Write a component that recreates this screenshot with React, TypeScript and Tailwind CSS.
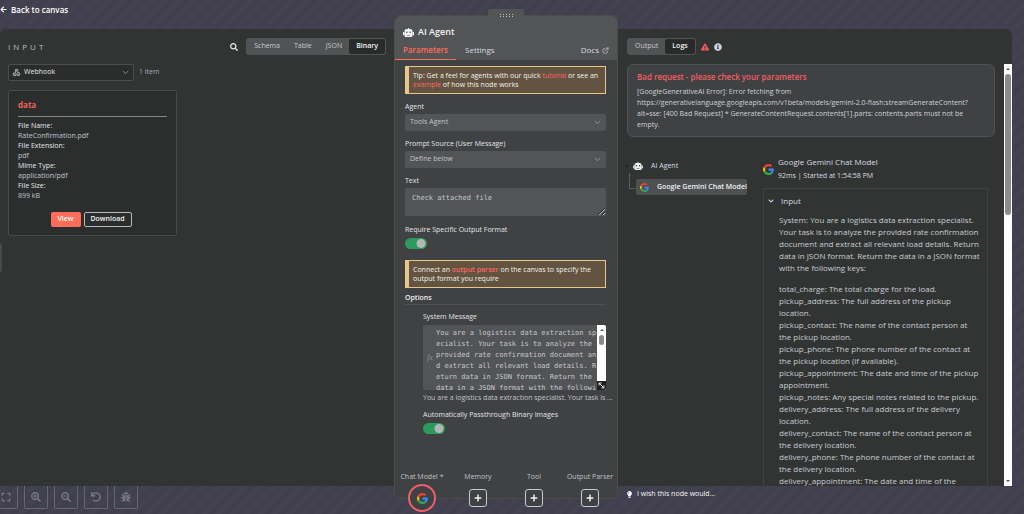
import React from 'react';
import {
  FaArrowLeft,
  FaBug,
  FaChevronDown,
  FaExclamationTriangle,
  FaExpand,
  FaInfoCircle,
  FaLightbulb,
  FaPlus,
  FaSearch,
  FaSearchMinus,
  FaSearchPlus,
  FaUndo,
} from 'react-icons/fa';
import { FiChevronDown, FiExternalLink } from 'react-icons/fi';
import { MdWebhook } from 'react-icons/md';

const SYSTEM_MESSAGE = `You are a logistics data extraction sp
ecialist. Your task is to analyze the
provided rate confirmation document an
d extract all relevant load details. R
eturn data in JSON format. Return the
data in a JSON format with the followi`;

const FILE_FIELDS = [
  { label: 'File Name:', value: 'RateConfirmation.pdf' },
  { label: 'File Extension:', value: 'pdf' },
  { label: 'Mime Type:', value: 'application/pdf' },
  { label: 'File Size:', value: '899 kB' },
];

const PROMPT_KEYS = [
  'total_charge: The total charge for the load.',
  'pickup_address: The full address of the pickup location.',
  'pickup_contact: The name of the contact person at the pickup location.',
  'pickup_phone: The phone number of the contact at the pickup location (if available).',
  'pickup_appointment: The date and time of the pickup appointment.',
  'pickup_notes: Any special notes related to the pickup.',
  'delivery_address: The full address of the delivery location.',
  'delivery_contact: The name of the contact person at the delivery location.',
  'delivery_phone: The phone number of the contact at the delivery location.',
  'delivery_appointment: The date and time of the',
];

const CANVAS_TOOLS = [
  { name: 'Fit view', icon: FaExpand },
  { name: 'Zoom in', icon: FaSearchPlus },
  { name: 'Zoom out', icon: FaSearchMinus },
  { name: 'Reset zoom', icon: FaUndo },
  { name: 'Debug', icon: FaBug },
];

const GoogleIcon: React.FC<{ className?: string }> = ({ className }) => (
  <svg viewBox="0 0 48 48" className={className} aria-hidden="true">
    <path fill="#EA4335" d="M24 9.5c3.54 0 6.71 1.22 9.21 3.6l6.85-6.85C35.9 2.38 30.47 0 24 0 14.62 0 6.51 5.38 2.56 13.22l7.98 6.19C12.43 13.72 17.74 9.5 24 9.5z" />
    <path fill="#4285F4" d="M46.98 24.55c0-1.57-.15-3.09-.38-4.55H24v9.02h12.94c-.58 2.96-2.26 5.48-4.78 7.18l7.73 6c4.51-4.18 7.09-10.36 7.09-17.65z" />
    <path fill="#FBBC05" d="M10.53 28.59c-.48-1.45-.76-2.99-.76-4.59s.27-3.14.76-4.59l-7.98-6.19C.92 16.46 0 20.12 0 24c0 3.88.92 7.54 2.56 10.78l7.97-6.19z" />
    <path fill="#34A853" d="M24 48c6.48 0 11.93-2.13 15.89-5.81l-7.73-6c-2.15 1.45-4.92 2.3-8.16 2.3-6.26 0-11.57-4.22-13.47-9.91l-7.98 6.19C6.51 42.62 14.62 48 24 48z" />
  </svg>
);

const RobotIcon: React.FC<{ className?: string }> = ({ className }) => (
  <svg viewBox="0 0 22 18" className={className} fill="currentColor" aria-hidden="true">
    <path
      fillRule="evenodd"
      d="M10 0h2v2h2.500A4.500 4.500 0 0 1 19 6.500V15a3 3 0 0 1-3 3H6a3 3 0 0 1-3-3V6.500A4.500 4.500 0 0 1 7.500 2H10V0zM7.500 7a1.600 1.600 0 1 0 0 3.200 1.600 1.600 0 0 0 0-3.200zm7 0a1.600 1.600 0 1 0 0 3.200 1.600 1.600 0 0 0 0-3.200zM7.500 14v1h7v-1h-7z"
    />
    <path d="M3 8v6.500H1a1 1 0 0 1-1-1V9a1 1 0 0 1 1-1h2zM19 8v6.500h2a1 1 0 0 0 1-1V9a1 1 0 0 0-1-1h-2z" />
  </svg>
);

interface SegmentedProps {
  items: string[];
  active: string;
}

const Segmented: React.FC<SegmentedProps> = ({ items, active }) => (
  <div className="flex h-[17px] rounded-[3px] bg-[#525355] p-px">
    {items.map((item) => (
      <button
        key={item}
        type="button"
        className={
          item === active
            ? 'rounded-[2px] bg-[#292b2b] px-[7px] text-[7px] font-semibold text-[#f0f1f4]'
            : 'px-[7px] text-[7px] font-medium text-[#c6c9d1]'
        }
      >
        {item}
      </button>
    ))}
  </div>
);

interface SelectFieldProps {
  id: string;
  label: string;
  value: string;
}

const SelectField: React.FC<SelectFieldProps> = ({ id, label, value }) => (
  <div className="mt-[7px] flex flex-col gap-px">
    <label htmlFor={id} className="text-[7px] leading-3 font-medium text-[#e2e4e8]">
      {label}
    </label>
    <div className="relative">
      <select
        id={id}
        className="block h-[17px] w-full appearance-none rounded-[2px] bg-[#535456] px-[5px] text-[7px] text-[#c1c3c9]"
      >
        <option>{value}</option>
      </select>
      <FiChevronDown className="pointer-events-none absolute top-1 right-1 size-[9px] text-[#a5a8ae]" />
    </div>
  </div>
);

const Toggle: React.FC<{ id: string }> = ({ id }) => (
  <input
    id={id}
    type="checkbox"
    role="switch"
    defaultChecked
    className="mt-0.5 block h-[11px] w-[22px] appearance-none rounded-full bg-[#2b9a5c] bg-[radial-gradient(circle_at_16px_50%,#b4b5b7_4px,transparent_5px)]"
  />
);

const Notice: React.FC<{ children: React.ReactNode }> = ({ children }) => (
  <p className="border border-l-4 border-[#e6c68c] bg-[#625440] py-1 pr-1 pl-1 text-[7px] leading-[9px] text-[#f4f2ee]">
    {children}
  </p>
);

const InputPanel: React.FC = () => (
  <section className="relative flex min-h-0 flex-1 flex-col overflow-hidden rounded-tl-md bg-[#323433] px-2 pt-[9px]">
    <div className="flex h-[17px] items-center justify-between">
      <h2 className="text-[8px] font-medium tracking-[3px] text-[#b9bcc4]">INPUT</h2>
      <div className="flex items-center gap-1">
        <button type="button" aria-label="Search" className="p-1">
          <FaSearch className="size-2 text-[#e6e7ea]" />
        </button>
        <Segmented items={['Schema', 'Table', 'JSON', 'Binary']} active="Binary" />
      </div>
    </div>

    <div className="mt-[9px] flex items-center gap-[5px]">
      <div className="relative w-[126px]">
        <MdWebhook className="absolute top-1 left-1 size-[9px] text-[#c9cbd0]" />
        <select
          aria-label="Input node"
          className="block h-[17px] w-full appearance-none rounded-[2px] border border-[#4c4e4e] bg-[#2b2d2d] pl-[15px] text-[7px] font-medium text-[#e6e7ea]"
        >
          <option>Webhook</option>
        </select>
        <FiChevronDown className="pointer-events-none absolute top-1 right-1 size-[9px] text-[#a5a8ae]" />
      </div>
      <span className="text-[7px] text-[#a3a9b8]">1 item</span>
    </div>

    <article className="mt-[9px] w-[169px] rounded-[2px] border border-[#484a4a] bg-[#2c2e2e] px-[9px] pt-1.5 pb-2">
      <h3 className="border-b border-[#84868a] pb-[3px] text-[8px] leading-4 font-bold text-[#f0605a]">data</h3>
      <dl className="mt-1 text-[7px] leading-[10px] text-[#c0c4cd]">
        {FILE_FIELDS.map((field) => (
          <React.Fragment key={field.label}>
            <dt className="font-medium text-[#e4e6ea]">{field.label}</dt>
            <dd>{field.value}</dd>
          </React.Fragment>
        ))}
      </dl>
      <div className="mt-[11px] flex justify-center gap-[3px] pr-[3px]">
        <button type="button" className="h-[15px] w-[30px] rounded-[2px] bg-[#ff6d5a] text-[7px] font-semibold text-white">
          View
        </button>
        <button type="button" className="h-[15px] w-12 rounded-[2px] border border-[#b4b8c0] text-[7px] font-semibold text-[#f0f1f3]">
          Download
        </button>
      </div>
    </article>

    <span className="absolute top-[214px] left-0 h-[29px] w-0.5 rounded-r-sm bg-[#47494a]" />
  </section>
);

const ParametersPanel: React.FC = () => (
  <section className="flex min-h-0 flex-1 flex-col rounded-md border border-[#4b4c4e] bg-[#404143]">
    <header className="rounded-t-md bg-[#535456] px-2 pt-2">
      <h1 className="flex items-center gap-1 text-[9px] leading-4 font-semibold text-[#f3f3f5]">
        <RobotIcon className="h-[9px] w-[11px]" />
        AI Agent
      </h1>
      <nav className="flex h-5 items-stretch text-[8px] font-medium text-[#d9dde4]">
        <button type="button" className="-ml-2 border-b border-[#ff6f5c] px-2 font-semibold text-[#ff6a5a]">
          Parameters
        </button>
        <button type="button" className="px-[9px]">
          Settings
        </button>
        <a href="#docs" className="ml-auto flex items-center gap-[3px]">
          Docs
          <FiExternalLink className="size-[7px]" />
        </a>
      </nav>
    </header>

    <div className="flex min-h-0 flex-1 flex-col pt-1.5 pr-[11px] pl-[10px]">
      <Notice>
        Tip: Get a feel for agents with our quick{' '}
        <a href="#tutorial" className="font-medium text-[#ff6464]">tutorial</a> or see an{' '}
        <a href="#example" className="font-medium text-[#ff6464]">example</a> of how this node works
      </Notice>

      <SelectField id="agent" label="Agent" value="Tools Agent" />
      <SelectField id="prompt-source" label="Prompt Source (User Message)" value="Define below" />

      <div className="mt-[7px] flex flex-col gap-px">
        <label htmlFor="text" className="text-[7px] leading-3 font-medium text-[#e2e4e8]">Text</label>
        <textarea
          id="text"
          defaultValue="Check attached file"
          className="block h-7 resize-y rounded-[2px] bg-[#535456] px-[7px] py-1 font-['DejaVu_Sans_Mono',monospace] text-[7px] leading-3 text-[#c6c8cc]"
        />
      </div>

      <div className="mt-2 mb-[11px]">
        <label htmlFor="output-format" className="block text-[7px] leading-3 font-medium text-[#e2e4e8]">
          Require Specific Output Format
        </label>
        <Toggle id="output-format" />
      </div>

      <Notice>
        Connect an <a href="#parser" className="font-semibold text-[#ff6464]">output parser</a> on the canvas to specify the output format you require
      </Notice>

      <h2 className="mt-1 border-b border-[#4e4f51] text-[7px] leading-3 font-semibold text-[#ececef]">Options</h2>

      <div className="mt-1.5 pl-[18px]">
        <label htmlFor="system-message" className="block text-[7px] leading-3 font-medium text-[#e2e4e8]">
          System Message
        </label>
        <div className="mt-0.5 flex h-[65px] overflow-hidden rounded-[2px] bg-[#535456]">
          <span className="flex w-[13px] items-center pl-1 font-['Liberation_Serif',serif] text-[8px] text-[#8e9094] italic">fx</span>
          <textarea
            id="system-message"
            defaultValue={SYSTEM_MESSAGE}
            className="min-w-0 flex-1 resize-none overflow-hidden pt-[3px] font-['DejaVu_Sans_Mono',monospace] text-[7px] leading-[11px] whitespace-pre text-[#c6c8cc]"
          />
          <div className="flex w-[9px] flex-col items-center bg-white pt-1">
            <span className="size-0 border-x-2 border-b-2 border-x-transparent border-b-[#555]" />
            <span className="mt-1 h-[10px] w-[5px] rounded-full bg-[#8a8a8a]" />
            <button type="button" aria-label="Expand editor" className="mt-auto flex size-[9px] items-center justify-center bg-[#1f2020]">
              <svg viewBox="0 0 10 10" className="size-[7px]" fill="none" stroke="#f0f0f0" strokeWidth="1.4">
                <path d="M2 2l6 6M1.500 5V1.500H5M8.500 5v3.500H5" />
              </svg>
            </button>
          </div>
        </div>
        <p className="-mr-1.5 mt-0.5 text-[7px] leading-3 whitespace-nowrap text-[#c0c3ca]">
          You are a logistics data extraction specialist. Your task is ...
        </p>
        <label htmlFor="passthrough" className="mt-[5px] block text-[7px] leading-3 font-medium text-[#e2e4e8]">
          Automatically Passthrough Binary Images
        </label>
        <Toggle id="passthrough" />
      </div>
    </div>

    <div className="-mx-px -mb-[14px] grid grid-cols-4 text-center text-[7px] leading-3 text-[#bfc3cc]">
      <div className="flex flex-col items-center gap-px">
        Chat Model *
        <button type="button" aria-label="Google Gemini Chat Model" className="flex size-7 items-center justify-center rounded-full border-2 border-[#ee5f68] bg-[#404143]">
          <GoogleIcon className="size-[11px]" />
        </button>
      </div>
      {['Memory', 'Tool', 'Output Parser'].map((name) => (
        <div key={name} className="flex flex-col items-center gap-1.5 whitespace-nowrap">
          {name}
          <button type="button" aria-label={`Add ${name}`} className="flex size-[18px] items-center justify-center rounded-[3px] border border-[#c5c8ce] bg-[#404143]">
            <FaPlus className="size-2 text-[#f0f1f3]" />
          </button>
        </div>
      ))}
    </div>
  </section>
);

const LogsPanel: React.FC = () => (
  <section className="flex min-h-0 flex-1 flex-col rounded-tr-md bg-[#323433] pt-[9px]">
    <div className="flex h-[17px] items-center gap-[5px] px-[9px]">
      <Segmented items={['Output', 'Logs']} active="Logs" />
      <FaExclamationTriangle className="size-2 text-[#f45b62]" />
      <FaInfoCircle className="size-2 text-[#ccd2e0]" />
    </div>

    <div className="mt-[9px] flex min-h-0 flex-1">
      <div className="min-w-0 flex-1 overflow-hidden px-[9px]">
        <div className="rounded-md border border-[#505153] bg-[#404143] py-1.5 pr-3 pl-[9px]">
          <h3 className="text-[8px] leading-3 font-semibold text-[#f25d63]">Bad request - please check your parameters</h3>
          <p className="mt-[3px] text-[7px] leading-[11px] wrap-break-word text-[#ced1d8]">
            [GoogleGenerativeAI Error]: Error fetching from
            https://generativelanguage.googleapis.com/v1beta/models/gemini-2.0-flash:streamGenerateContent?<wbr />alt=sse: [400 Bad Request] * GenerateContentRequest.contents[1].parts: contents.parts must not be empty.
          </p>
        </div>

        <div className="mt-[18px] flex text-[#d8dbe0]">
          <div className="w-[136px] shrink-0 pt-[5px]">
            <div className="flex h-3 items-center text-[7px]">
              <FaChevronDown className="-ml-0.5 size-1 text-[#0d0e0e]" />
              <RobotIcon className="ml-1 h-2 w-[10px] text-[#f0f0f2]" />
              <span className="ml-2">AI Agent</span>
            </div>
            <div className="flex pl-0.5">
              <span className="mt-px h-4 w-[7px] border-b border-l border-[#5a5c5d]" />
              <button type="button" className="mt-[7px] flex h-4 w-[111px] items-center gap-2 rounded-[2px] bg-[#4f5052] pl-1 text-[7px] font-semibold whitespace-nowrap text-[#eeeff2]">
                <GoogleIcon className="size-[9px] shrink-0" />
                Google Gemini Chat Model
              </button>
            </div>
          </div>

          <div className="min-w-0 flex-1 pr-[7px]">
            <div className="flex items-center gap-1">
              <GoogleIcon className="size-[11px]" />
              <div>
                <h3 className="text-[8px] leading-[14px] font-medium">Google Gemini Chat Model</h3>
                <p className="text-[7px] leading-[14px] font-medium">92ms | Started at 1:54:58 PM</p>
              </div>
            </div>
            <div className="mt-[5px] border border-[#3e4041] pt-1.5 pr-[7px] pb-4 pl-[15px]">
              <button type="button" className="-ml-[11px] flex items-center gap-[7px] text-[8px] leading-3 font-medium">
                <FaChevronDown className="size-1.5" />
                Input
              </button>
              <div className="mt-[7px] text-[8px] leading-3 text-[#c9ccd3]">
                <p>
                  System: You are a logistics data extraction specialist. Your task is to analyze the provided rate confirmation document and extract all relevant load details. Return data in JSON format. Return the data in a JSON format with the following keys:
                </p>
                <div className="mt-[9px]">
                  {PROMPT_KEYS.map((line) => (
                    <p key={line}>{line}</p>
                  ))}
                </div>
              </div>
            </div>
          </div>
        </div>
      </div>

      <div className="flex w-2 flex-col items-center justify-between bg-[#fcfcfc] py-1">
        <span className="size-0 border-x-2 border-b-2 border-x-transparent border-b-[#555]" />
        <span className="mt-1 mb-auto h-[141px] w-1.5 rounded-full bg-[#8b8b8b]" />
        <span className="size-0 border-x-2 border-t-2 border-x-transparent border-t-[#555]" />
      </div>
    </div>
  </section>
);

const App: React.FC = () => {
  return (
    <main className="flex h-screen overflow-hidden bg-[repeating-linear-gradient(135deg,#403f4d_0_5px,#444251_5px_10px)] pr-3 font-['Open_Sans',sans-serif]">
      <div className="flex min-w-0 flex-1 flex-col">
        <a href="#canvas" className="flex h-[29px] items-start gap-1 pt-1 text-[8px] leading-3 font-semibold text-white">
          <FaArrowLeft className="mt-0.5 size-[7px]" />
          Back to canvas
        </a>
        <InputPanel />
        <div className="flex h-7 items-start gap-1.5 overflow-hidden">
          {CANVAS_TOOLS.map(({ name, icon: Icon }) => (
            <button
              key={name}
              type="button"
              aria-label={name}
              className="flex h-[23px] w-6 items-center justify-center rounded-b-[2px] border border-t-0 border-[#646674] text-[#757886] first:-ml-1.5"
            >
              <Icon className="size-[10px]" />
            </button>
          ))}
        </div>
      </div>

      <div className="flex w-[224px] flex-col pt-[9px] pb-[15px]">
        <div className="z-10 mx-auto -mb-[3px] grid h-[9px] w-9 grid-cols-[repeat(5,1px)] content-end justify-center gap-x-0.5 gap-y-px rounded-t-[2px] bg-[#535456] pb-px">
          {Array.from({ length: 10 }, (_, i) => (
            <span key={i} className="size-px bg-[#c0c1c4]" />
          ))}
        </div>
        <ParametersPanel />
      </div>

      <div className="flex min-w-0 flex-1 flex-col pt-[29px]">
        <LogsPanel />
        <div className="h-7 pt-0.5 pl-2">
          <a href="#feedback" className="flex items-center gap-1 text-[7px] leading-3 font-medium text-[#f6f6f8]">
            <FaLightbulb className="size-[7px]" />
            I wish this node would...
          </a>
        </div>
      </div>
    </main>
  );
};

export default App;
